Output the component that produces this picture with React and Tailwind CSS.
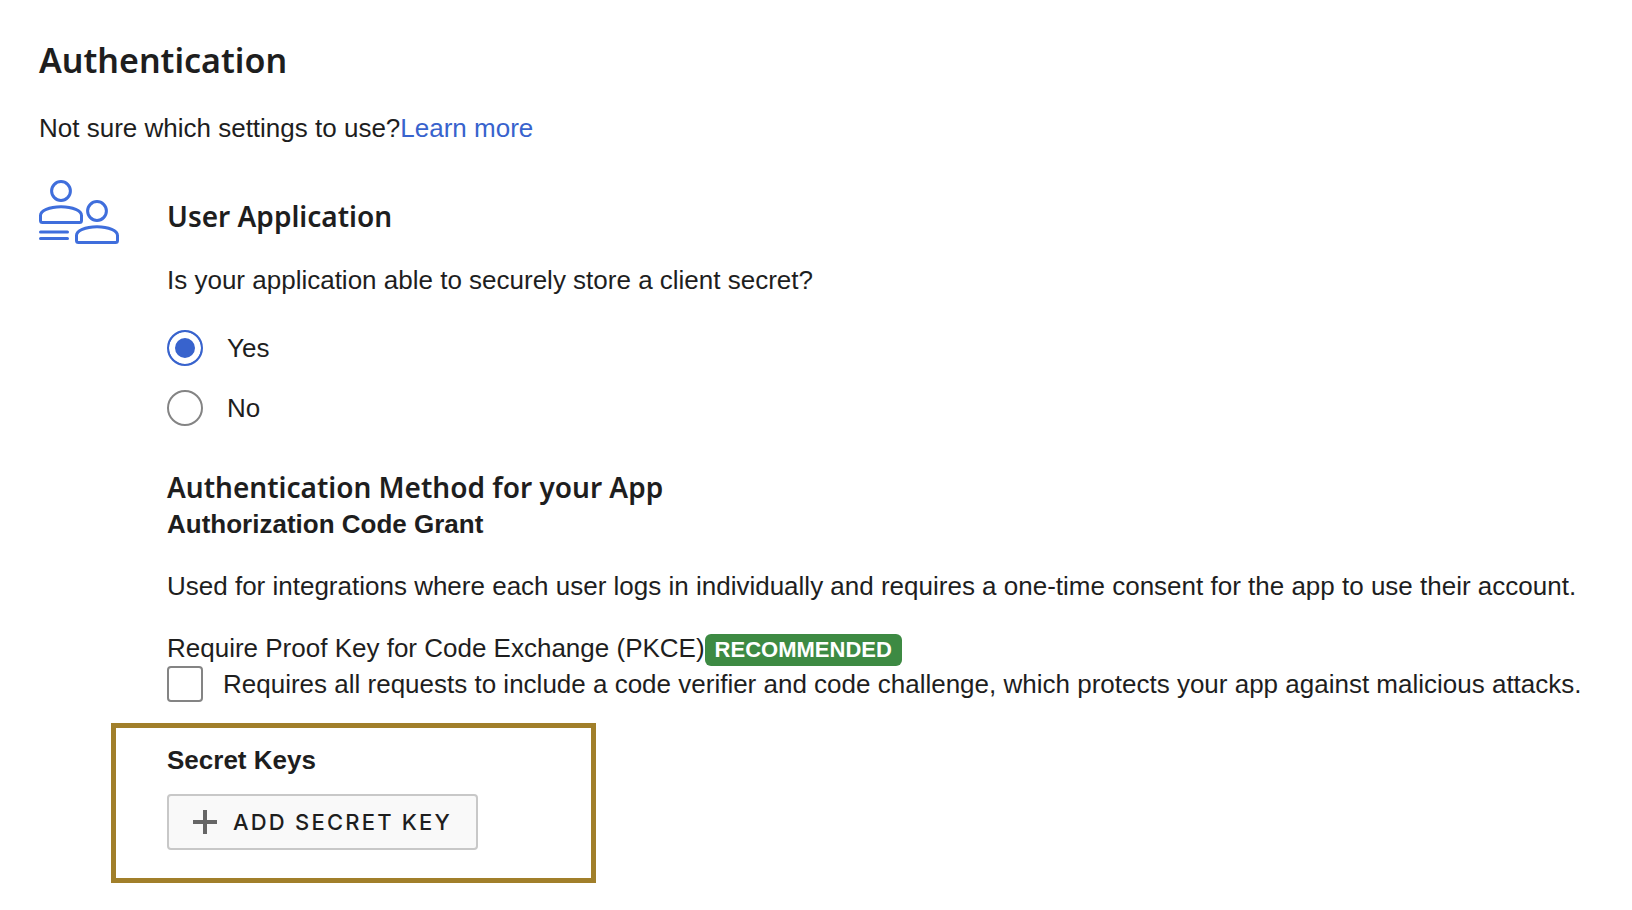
import { useState } from "react";

function UsersIcon() {
  return (
    <svg className="h-16 w-20 shrink-0" viewBox="0 0 80 64" fill="none" stroke="#3f6edc" strokeWidth="3" aria-hidden="true">
      <circle cx="22" cy="11" r="9.4" />
      <path d="M1.5 40.5V35.5C1.5 31 10 26.7 22 26.7S42.5 31 42.5 35.5V40.5a2 2 0 0 1-2 2h-37a2 2 0 0 1-2-2z" />
      <circle cx="58" cy="31" r="9.4" />
      <path d="M37.5 60.5V55.5C37.5 51 46 46.7 58 46.7S78.5 51 78.5 55.5V60.5a2 2 0 0 1-2 2h-37a2 2 0 0 1-2-2z" />
      <path d="M1.5 52H28.5M1.5 58.5H28.5" strokeLinecap="round" />
    </svg>
  );
}

function RadioOption({ id, label, checked, onChange }) {
  return (
    <div className="flex items-center gap-6">
      <input
        id={id}
        type="radio"
        name="client-secret"
        checked={checked}
        onChange={onChange}
        className="size-9 shrink-0 appearance-none rounded-full border-2 border-[#848484] bg-white checked:border-[#3863cd] checked:bg-[#3863cd] checked:shadow-[inset_0_0_0_6px_white]"
      />
      <label htmlFor={id}>{label}</label>
    </div>
  );
}

export default function App() {
  const [secure, setSecure] = useState("yes");
  const [pkce, setPkce] = useState(false);

  return (
    <main className="min-h-screen bg-white pt-[38px] pr-4 pb-6 pl-[39px] font-['Liberation_Sans',Arial,sans-serif] text-[26px] leading-9 text-[#1e1e1e]">
      <h1 className="font-['Noto_Sans',sans-serif] text-[34px] leading-[44px] font-semibold">Authentication</h1>
      <p className="mt-7">
        Not sure which settings to use?
        <a href="#learn-more" className="text-[#3863cd]">Learn more</a>
      </p>

      <section className="mt-[34px] flex items-start gap-12">
        <UsersIcon />
        <div className="min-w-0 flex-1 pt-[18px]">
          <h2 className="font-['Noto_Sans',sans-serif] text-[28px] leading-9 font-semibold">User Application</h2>
          <fieldset className="mt-7">
            <legend>Is your application able to securely store a client secret?</legend>
            <div className="mt-8 flex flex-col gap-6">
              <RadioOption id="secure-yes" label="Yes" checked={secure === "yes"} onChange={() => setSecure("yes")} />
              <RadioOption id="secure-no" label="No" checked={secure === "no"} onChange={() => setSecure("no")} />
            </div>
          </fieldset>

          <h2 className="mt-[43px] font-['Noto_Sans',sans-serif] text-[28px] leading-9 font-semibold">
            Authentication Method for your App
          </h2>
          <h3 className="mt-px font-bold">Authorization Code Grant</h3>
          <p className="mt-[26px]">
            Used for integrations where each user logs in individually and requires a one-time consent for the app to use their account.
          </p>

          <div className="mt-[26px] flex items-center">
            <span>Require Proof Key for Code Exchange (PKCE)</span>
            <span className="mt-1 rounded-md bg-[#3d8a43] px-[10px] text-[22px] leading-8 font-bold text-white">RECOMMENDED</span>
          </div>
          <div className="flex items-center gap-5">
            <input
              id="pkce"
              type="checkbox"
              checked={pkce}
              onChange={(e) => setPkce(e.target.checked)}
              className="size-9 shrink-0 appearance-none rounded-sm border-2 border-[#848484] bg-white checked:bg-[#3863cd]"
            />
            <label htmlFor="pkce">
              Requires all requests to include a code verifier and code challenge, which protects your app against malicious attacks.
            </label>
          </div>

          <section className="mt-[21px] -ml-14 w-[485px] max-w-full border-5 border-[#a17f2a] pt-[14px] pb-7 pl-[51px]">
            <h3 className="font-bold">Secret Keys</h3>
            <button
              type="button"
              className="mt-4 flex h-14 items-center gap-4 rounded-sm border-2 border-[#c8c8c8] bg-[#f9f9f9] px-6 font-['Inter',sans-serif] text-[22px] font-medium tracking-widest"
            >
              <svg className="size-6" viewBox="0 0 24 24" fill="none" stroke="#666666" strokeWidth="4" aria-hidden="true">
                <path d="M12 0V24M0 12H24" />
              </svg>
              ADD SECRET KEY
            </button>
          </section>
        </div>
      </section>
    </main>
  );
}
